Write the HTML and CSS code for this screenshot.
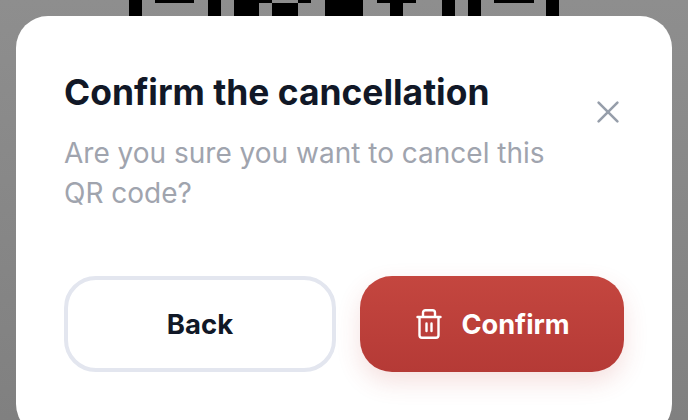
FILE: index.html
```html
<!DOCTYPE html>
<html lang="en">
<head>
<meta charset="utf-8">
<title>Confirm the cancellation</title>
<link rel="stylesheet" href="styles.css">
</head>
<body>
<div class="backdrop">
  <svg class="qr" width="432" height="16" viewBox="128 0 432 16" aria-hidden="true">
    <path d="M129 0h13v16h-13zM155 0h39v3h-39zM208 0h13v16h-13zM234 0h25v16h-25zM259 0h13v3h-13zM272 3h26v13h-26zM298 0h13v3h-13zM325 0h38v16h-38zM377 0h13v3h-13zM390 0h13v16h-13zM403 0h13v3h-13zM442 0h13v16h-13zM468 0h13v16h-13zM494 0h40v3h-40zM546 0h13v16h-13z"/>
  </svg>
  <section class="dialog">
    <div class="body">
      <div class="copy">
        <h1 class="title">Confirm the cancellation</h1>
        <p class="text">Are you sure you want to cancel this QR code?</p>
      </div>
      <button class="close" type="button" aria-label="Close">
        <svg class="close-icon" width="24" height="24" viewBox="0 0 24 24"><path d="M2.600 2.600l18.800 18.800M21.400 2.600L2.600 21.400"/></svg>
      </button>
    </div>
    <div class="actions">
      <button class="btn back" type="button">Back</button>
      <button class="btn confirm" type="button">
        <svg class="trash-icon" width="26" height="30" viewBox="0 0 26 30"><path d="M1.500 8h23M7 8V3.700A2.500 2.500 0 0 1 9.500 1.200h7A2.500 2.500 0 0 1 19 3.700V8M3.500 8v18.300A2.500 2.500 0 0 0 6 28.800h14a2.500 2.500 0 0 0 2.500-2.500V8M10.500 14.500v7.500M15.500 14.500v7.500"/></svg>
        <span>Confirm</span>
      </button>
    </div>
  </section>
</div>
</body>
</html>
```
FILE: styles.css
```css
* { box-sizing: border-box; }
html, body { margin: 0; height: 100%; }
body { font-family: Inter, "Liberation Sans", sans-serif; overflow: hidden; }
.backdrop { width: 688px; height: 420px; background: linear-gradient(180deg, #8e8e8e, #808080); display: flex; flex-direction: column; padding: 0 16px; }
.qr { display: block; flex: none; margin-left: 112px; fill: #000; }
.dialog { width: 656px; height: 420px; flex: none; background: #fff; border-radius: 32px; padding: 56px 48px 0; }
.body { display: flex; justify-content: space-between; height: 204px; }
.copy { width: 500px; }
.title { margin: 0; font-size: 35.4px; line-height: 41px; font-weight: 700; color: #111827; }
.text { margin: 20px 0 0; font-size: 28px; line-height: 40px; font-weight: 400; color: #a0a4ae; }
.close { width: 24px; height: 24px; padding: 0; margin: 28px 4px 0 0; border: 0; background: none; }
.close-icon { display: block; fill: none; stroke: #969eaa; stroke-width: 2.6; stroke-linecap: round; }
.actions { display: flex; gap: 24px; }
.btn { height: 96px; border-radius: 32px; font-family: inherit; font-size: 27.5px; font-weight: 700; display: flex; align-items: center; justify-content: center; }
.back { width: 272px; background: #fff; border: 4px solid #e3e6ef; color: #111827; }
.confirm { width: 264px; gap: 19px; padding: 0 0 0 2px; border: 0; color: #fff; font-size: 27.2px; background: linear-gradient(180deg, #c4463f, #b53a36); box-shadow: 0 10px 24px rgba(190, 60, 55, .16); }
.trash-icon { display: block; fill: none; stroke: #fff; stroke-width: 2.4; stroke-linecap: round; stroke-linejoin: round; }
```
